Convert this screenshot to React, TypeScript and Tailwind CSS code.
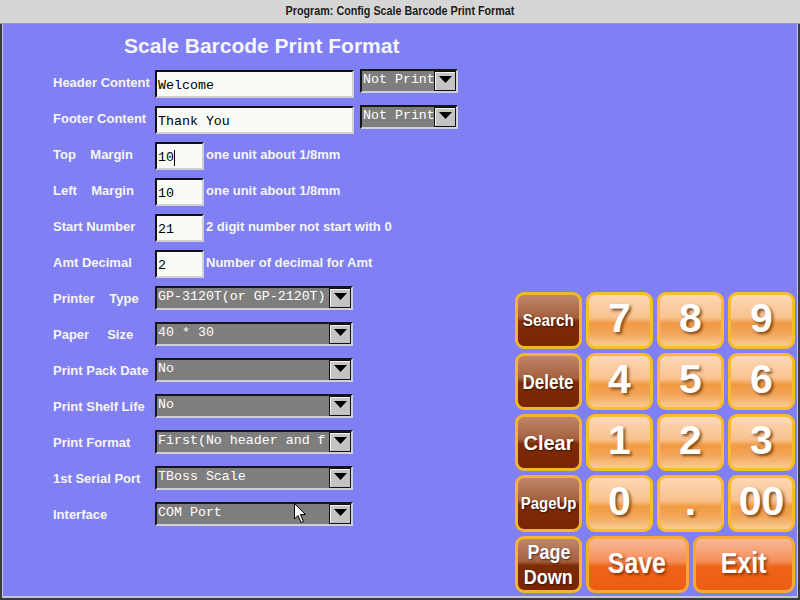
import React from 'react';

const mono = "font-['Liberation_Mono','DejaVu_Sans_Mono',monospace] text-[13.3px]";

const TextBox = ({ value, width, caret }: { value: string; width: string; caret?: boolean }) => (
  <div className={`h-[28px] ${width} flex items-center bg-[#f8fcf4] border-2 border-t-[#101010] border-l-[#101010] border-b-[#d0d0dc] border-r-[#d0d0dc] pl-[1px] pt-[3px] ${mono} text-black`}>
    <span className="whitespace-pre">{value}</span>
    {caret && <span className="inline-block w-px h-[16px] bg-black" />}
  </div>
);

const Select = ({ value, width }: { value: string; width: string }) => (
  <div className={`h-[24px] ${width} flex items-stretch bg-[#7e7e7e] border-2 border-t-[#161616] border-l-[#161616] border-b-[#d0d0dc] border-r-[#d0d0dc]`}>
    <div className={`flex-1 overflow-hidden whitespace-pre pl-[1px] leading-[17px] text-white ${mono}`}>{value}</div>
    <div className="w-[22px] bg-[#c4c4c4] border border-[#101010] shadow-[inset_1px_1px_0_#f4f4f4] flex justify-center pt-[4px]">
      <svg width="13" height="7" viewBox="0 0 13 7">
        <polygon points="0,0 13,0 6.5,7" fill="#000" />
      </svg>
    </div>
  </div>
);

const Row = ({ label, children }: { label: string; children: React.ReactNode }) => (
  <div className="h-[36px] flex items-start">
    <div className="w-[102px] shrink-0 leading-[26px] text-[13px] font-bold text-[#f6f6f6] whitespace-pre">{label}</div>
    {children}
  </div>
);

const Note = ({ text }: { text: string }) => (
  <span className="ml-[2px] leading-[26px] text-[13px] font-bold text-[#f6f6f6]">{text}</span>
);

const fnBtn =
  'h-[57px] w-[67px] rounded-[9px] border-[3px] border-[#f2b62c] bg-[linear-gradient(#bf866a_0%,#a4603e_44%,#7e2c06_52%,#782602_100%)] flex flex-col items-center justify-center text-white font-bold [text-shadow:1px_1px_2px_rgba(0,0,0,0.6)] leading-none';

const numBtn =
  'h-[57px] rounded-[9px] border-[3px] border-[#fbbc2a] bg-[linear-gradient(#fdd8b6_0%,#f9c28e_44%,#f19a42_56%,#f3a65a_76%,#f9cc94_100%)] flex items-center justify-center pb-[5px] text-white font-bold text-[41px] leading-none [text-shadow:2px_2px_3px_rgba(90,40,0,0.75)]';

const bigBtn =
  'h-[57px] flex-1 rounded-[9px] border-[3px] border-[#f8a834] bg-[linear-gradient(#fab896_0%,#f58e58_44%,#ee6518_54%,#ec5c12_100%)] flex items-center justify-center pb-[3px] text-white font-bold text-[29px] leading-none [text-shadow:2px_2px_3px_rgba(90,30,0,0.7)]';

export default function App() {
  return (
    <div className="w-[800px] h-[600px] flex flex-col font-['Liberation_Sans',Arial,sans-serif] overflow-hidden">
      {/* title bar */}
      <div className="h-[24px] shrink-0 bg-[#d6d6d6] border-b border-[#9a9aa4] flex items-center justify-center">
        <span className="inline-block scale-x-[0.86] text-[12.5px] font-bold text-[#1c1c1c]">Program: Config Scale Barcode Print Format</span>
      </div>

      <div className="flex-1 flex border-l-2 border-r-2 border-b-2 border-[#3a3a44]">
        <div className="flex-1 flex bg-[#8080f4] border-l border-r border-b-2 border-[#c4c4d4]">
          {/* form */}
          <div className="flex flex-col pl-[50px]">
            <div className="ml-[71px] mt-[10px] mb-[12px] h-[24px] leading-[24px] text-[21px] font-bold text-[#f6f6f6]">
              Scale Barcode Print Format
            </div>

            <Row label="Header Content">
              <TextBox value="Welcome" width="w-[199px]" />
              <div className="ml-[6px] -mt-px">
                <Select value="Not Print" width="w-[98px]" />
              </div>
            </Row>
            <Row label="Footer Content">
              <TextBox value="Thank You" width="w-[199px]" />
              <div className="ml-[6px] -mt-px">
                <Select value="Not Print" width="w-[98px]" />
              </div>
            </Row>
            <Row label="Top    Margin">
              <TextBox value="10" width="w-[49px]" caret />
              <Note text="one unit about 1/8mm" />
            </Row>
            <Row label="Left    Margin">
              <TextBox value="10" width="w-[49px]" />
              <Note text="one unit about 1/8mm" />
            </Row>
            <Row label="Start Number">
              <TextBox value="21" width="w-[49px]" />
              <Note text="2 digit number not start with 0" />
            </Row>
            <Row label="Amt Decimal">
              <TextBox value="2" width="w-[49px]" />
              <Note text="Number of decimal for Amt" />
            </Row>
            <Row label="Printer    Type">
              <Select value="GP-3120T(or GP-2120T)" width="w-[198px]" />
            </Row>
            <Row label="Paper     Size">
              <Select value="40 * 30" width="w-[198px]" />
            </Row>
            <Row label="Print Pack Date">
              <Select value="No" width="w-[198px]" />
            </Row>
            <Row label="Print Shelf Life">
              <Select value="No" width="w-[198px]" />
            </Row>
            <Row label="Print Format">
              <Select value="First(No header and f" width="w-[198px]" />
            </Row>
            <Row label="1st Serial Port">
              <Select value="TBoss Scale" width="w-[198px]" />
            </Row>
            <Row label="Interface">
              <div className="relative">
                <Select value="COM Port" width="w-[198px]" />
                <svg className="absolute left-[139px] top-[1px]" width="13" height="21" viewBox="0 0 13 21">
                  <path d="M0.5 0.5 L0.5 16 L4 12.5 L7 19.5 L9.5 18.5 L6.5 11.5 L11.5 11.5 Z" fill="#fff" stroke="#000" strokeWidth="1" />
                </svg>
              </div>
            </Row>
          </div>

          {/* keypad */}
          <div className="ml-auto self-end mr-[2px] mb-[3px] flex flex-col gap-[4px]">
            <div className="grid grid-cols-[67px_67px_67px_67px] gap-[4px]">
              <div className={fnBtn}>
                <span className="inline-block scale-x-[0.9] text-[17px]">Search</span>
              </div>
              <div className={numBtn}>7</div>
              <div className={numBtn}>8</div>
              <div className={numBtn}>9</div>

              <div className={fnBtn}>
                <span className="inline-block scale-x-[0.85] text-[20px]">Delete</span>
              </div>
              <div className={numBtn}>4</div>
              <div className={numBtn}>5</div>
              <div className={numBtn}>6</div>

              <div className={fnBtn}>
                <span className="inline-block text-[20px]">Clear</span>
              </div>
              <div className={numBtn}>1</div>
              <div className={numBtn}>2</div>
              <div className={numBtn}>3</div>

              <div className={fnBtn}>
                <span className="inline-block scale-x-[0.88] text-[17px]">PageUp</span>
              </div>
              <div className={numBtn}>0</div>
              <div className={numBtn}>.</div>
              <div className={numBtn}>00</div>
            </div>
            <div className="flex gap-[4px]">
              <div className={`${fnBtn} gap-[5px]`}>
                <span className="inline-block scale-x-[0.9] text-[20px]">Page</span>
                <span className="inline-block scale-x-[0.9] text-[20px]">Down</span>
              </div>
              <div className={bigBtn}>
                <span className="inline-block scale-x-[0.86]">Save</span>
              </div>
              <div className={bigBtn}>
                <span className="inline-block scale-x-[0.86]">Exit</span>
              </div>
            </div>
          </div>
        </div>
      </div>
    </div>
  );
}
